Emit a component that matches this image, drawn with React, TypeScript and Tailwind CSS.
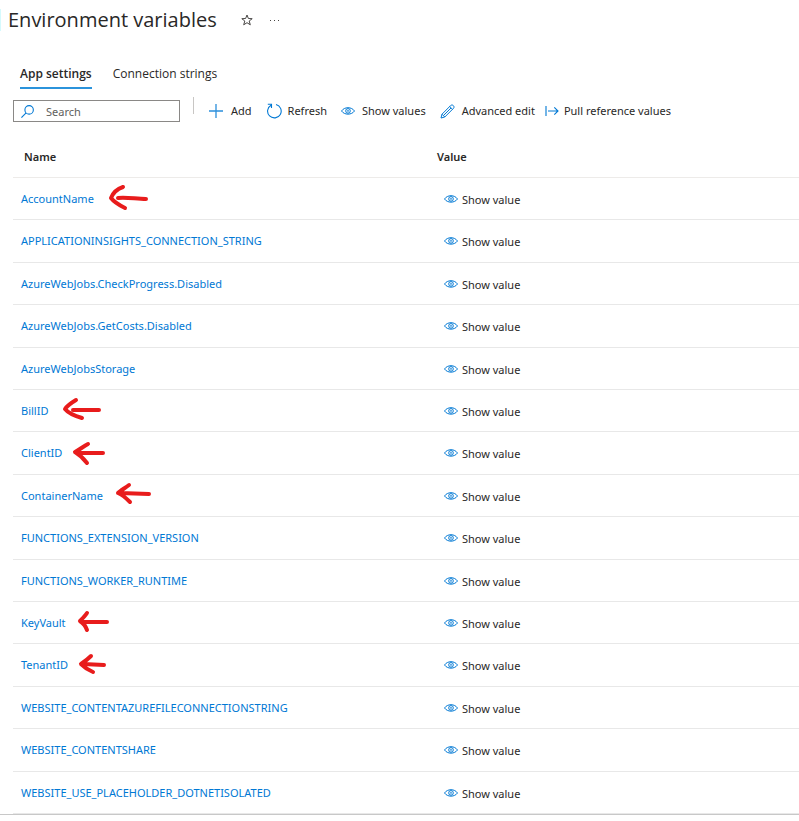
import React from "react";

type Setting = { name: string };

const settings: Setting[] = [
  { name: "AccountName" },
  { name: "APPLICATIONINSIGHTS_CONNECTION_STRING" },
  { name: "AzureWebJobs.CheckProgress.Disabled" },
  { name: "AzureWebJobs.GetCosts.Disabled" },
  { name: "AzureWebJobsStorage" },
  { name: "BillID" },
  { name: "ClientID" },
  { name: "ContainerName" },
  { name: "FUNCTIONS_EXTENSION_VERSION" },
  { name: "FUNCTIONS_WORKER_RUNTIME" },
  { name: "KeyVault" },
  { name: "TenantID" },
  { name: "WEBSITE_CONTENTAZUREFILECONNECTIONSTRING" },
  { name: "WEBSITE_CONTENTSHARE" },
  { name: "WEBSITE_USE_PLACEHOLDER_DOTNETISOLATED" },
];

// Hand-drawn marks: a head and a shaft for each, measured from the table's top-left corner.
const arrows: string[] = [
  "M110 52 C104 54 100 58 98 63 C101 67 106 70 112 73 M105 63 C114 62 123 64 133 64",
  "M63 265 C58 268 54 271 52 274 C56 279 62 281 69 283 M60 275 L86 275",
  "M75 309 C71 311 66 315 62 317 C67 320 71 324 74 328 M64 318 L90 318",
  "M116 350 C112 353 107 356 105 358 C110 360 114 364 117 367 M107 358 L136 359",
  "M74 478 C72 481 69 484 67 486 C70 488 73 492 74 495 M68 487 L94 487",
  "M78 521 C75 524 71 527 68 529 C71 532 75 535 80 537 M70 529 L91 530",
];

function EyeIcon() {
  return (
    <svg className="h-[14px] w-[14px] shrink-0" viewBox="0 0 14 14" fill="none" stroke="#0078d4" aria-hidden="true">
      <path d="M.5 7C3.500 2.600 10.500 2.600 13.500 7C10.500 11.200 3.500 11.200 .5 7Z" />
      <circle cx="7" cy="6.900" r="2.300" />
      <circle cx="7" cy="6.900" r=".8" fill="#0078d4" stroke="none" />
    </svg>
  );
}

function Command({ icon, label, className }: { icon: React.ReactNode; label: string; className: string }) {
  return (
    <button type="button" className={`flex shrink-0 items-center whitespace-nowrap ${className}`}>
      {icon}
      {label}
    </button>
  );
}

export default function App() {
  return (
    <main className="bg-white pb-1.5 font-['Noto_Sans','Open_Sans',sans-serif] text-[11px] leading-4 text-[#292827]">
      <header className="flex h-10 items-center">
        <div className="mr-[7px] h-[22px] w-px bg-[#d5fafd]" />
        <h1 className="font-['Open_Sans','Noto_Sans',sans-serif] text-xl">Environment variables</h1>
        <button type="button" aria-label="Add to favorites" className="ml-6">
          <svg className="h-3 w-3" viewBox="0 0 12 12" fill="none" stroke="#484644" strokeWidth="1">
            <path d="M6 1L7.400 4.500L11.200 4.700L8.200 7L9.300 10.800L6 8.700L2.700 10.800L3.800 7L.8 4.700L4.600 4.500Z" />
          </svg>
        </button>
        <button type="button" aria-label="More actions" className="ml-4">
          <svg className="h-3 w-3" viewBox="0 0 12 12" fill="#484644">
            <path d="M1 6h1v1H1zM5 6h1v1h-1zM9 6h1v1h-1z" />
          </svg>
        </button>
      </header>

      <nav className="mt-5 flex gap-[21px] pl-5 font-['Open_Sans','Noto_Sans',sans-serif] text-xs">
        <a href="#app-settings" className="flex h-[29px] items-center border-b-2 border-[#2b93db] font-semibold">
          App settings
        </a>
        <a href="#connection-strings" className="flex h-[27px] items-center">
          Connection strings
        </a>
      </nav>

      <div className="mt-1.5 flex h-8 items-center pl-[13px]">
        <label className="flex h-[22px] w-[167px] shrink-0 items-center border border-[#8a8886] pl-[7px]">
          <svg className="h-[13px] w-[13px] shrink-0" viewBox="0 0 12 12" fill="none" stroke="#0078d4" aria-hidden="true">
            <circle cx="7.500" cy="4.500" r="3.900" />
            <path d="M4.700 7.300L.4 11.600" />
          </svg>
          <input type="text" aria-label="Search" placeholder="Search" className="ml-3 w-24 pt-px outline-none placeholder:text-[#605e5c]" />
        </label>
        <div className="mb-3 ml-[13px] h-[17px] w-px shrink-0 bg-[#c8c6c4]" />
        <Command
          className="ml-[15px] gap-2"
          label="Add"
          icon={
            <svg className="h-[14px] w-[14px]" viewBox="0 0 14 14" fill="none" stroke="#2b8fdb" aria-hidden="true">
              <path d="M7 0V14M0 7H14" strokeWidth="1.300" />
            </svg>
          }
        />
        <Command
          className="ml-3.5 gap-1.5"
          label="Refresh"
          icon={
            <svg className="h-4 w-4" viewBox="0 0 16 16" fill="none" stroke="#0078d4" strokeWidth="1.100" aria-hidden="true">
              <path d="M10 1.500A6.800 6.800 0 1 1 5 2.200M1.800 1.300H5.500V5" />
            </svg>
          }
        />
        <Command className="ml-3.5 gap-[7px]" label="Show values" icon={<EyeIcon />} />
        <Command
          className="ml-3.5 gap-[7px]"
          label="Advanced edit"
          icon={
            <svg className="h-[15px] w-[15px]" viewBox="0 0 15 15" fill="none" stroke="#0078d4" aria-hidden="true">
              <path d="M1 14L2 10.200L10.700 1.500C12.500 -.1 15.100 2.500 13.500 4.300L4.800 13ZM2 10.200L4.800 13M9.700 2.500L12.500 5.300M3.600 11.400L11 4" />
            </svg>
          }
        />
        <Command
          className="ml-2.5 gap-[5px]"
          label="Pull reference values"
          icon={
            <svg className="h-[14px] w-[14px]" viewBox="0 0 14 14" fill="none" stroke="#0078d4" strokeWidth="1.100" aria-hidden="true">
              <path d="M1 2V12M3 7H13M9.300 3.300L13 7L9.300 10.700" />
            </svg>
          }
        />
      </div>

      <div className="relative mt-2 ml-[13px]">
        <table className="w-full table-fixed border-separate border-spacing-0">
          <thead>
            <tr className="h-[43px]">
              <th scope="col" className="w-[424px] border-b border-[#edebe9] pt-0.5 pl-[11px] text-left font-semibold">
                Name
              </th>
              <th scope="col" className="border-b border-[#edebe9] pt-0.5 text-left font-semibold">
                Value
              </th>
            </tr>
          </thead>
          <tbody>
            {settings.map((setting) => (
              <tr key={setting.name} className="h-[42px] nth-[5n+2]:h-[43px] nth-[5n+4]:h-[43px]">
                <td className="border-b border-[#e8e8e8] pl-2">
                  <a href={`#${setting.name}`} className="text-[#0078d4]">
                    {setting.name}
                  </a>
                </td>
                <td className="border-b border-[#e8e8e8] pt-0.5 pl-[7px]">
                  <button type="button" className="flex items-start gap-1">
                    <EyeIcon />
                    Show value
                  </button>
                </td>
              </tr>
            ))}
          </tbody>
        </table>
        <svg
          className="pointer-events-none absolute top-0 left-0 h-[600px] w-40"
          viewBox="0 0 160 600"
          fill="none"
          stroke="#e81c1c"
          strokeWidth="4"
          strokeLinecap="round"
          strokeLinejoin="round"
          aria-hidden="true"
        >
          {arrows.map((d) => (
            <path key={d} d={d} />
          ))}
        </svg>
      </div>
      <div className="h-px bg-[#c8c8c8]" />
    </main>
  );
}
